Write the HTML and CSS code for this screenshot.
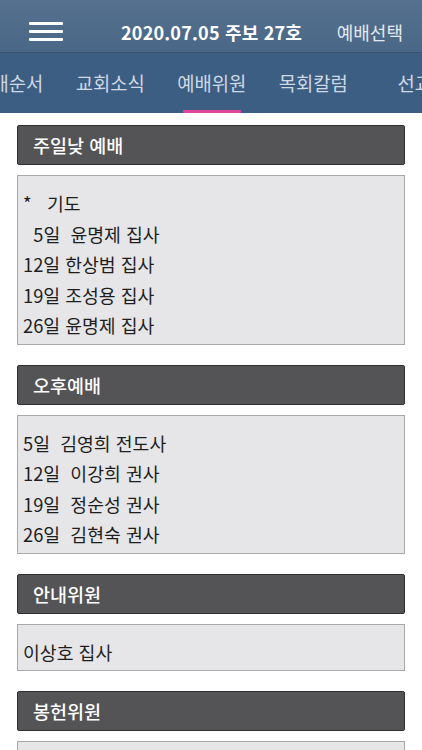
FILE: index.html
```html
<!DOCTYPE html>
<html lang="ko">
<head>
<meta charset="utf-8">
<link rel="stylesheet" href="styles.css">
</head>
<body>
<header class="topbar">
  <button class="menu" aria-label="menu">
    <svg width="34" height="20" viewBox="0 0 34 20"><g fill="#fff"><rect x="0" y="0" width="34" height="3" rx="1"/><rect x="0" y="8" width="34" height="3" rx="1"/><rect x="0" y="16" width="34" height="3" rx="1"/></g></svg>
  </button>
  <div class="title">2020.07.05 주보 27호</div>
  <div class="select">예배선택</div>
</header>
<nav class="tabs">
  <div class="tabs-inner">
    <div class="tab">예배순서</div>
    <div class="tab">교회소식</div>
    <div class="tab active">예배위원</div>
    <div class="tab">목회칼럼</div>
    <div class="tab">선교</div>
  </div>
</nav>
<main class="content">
  <section class="sec">
    <h2 class="sec-head">주일낮 예배</h2>
    <div class="sec-body">
      <div class="line">*   기도</div>
      <div class="line">  5일  윤명제 집사</div>
      <div class="line">12일 한상범 집사</div>
      <div class="line">19일 조성용 집사</div>
      <div class="line">26일 윤명제 집사</div>
    </div>
  </section>
  <section class="sec">
    <h2 class="sec-head">오후예배</h2>
    <div class="sec-body">
      <div class="line">5일  김영희 전도사</div>
      <div class="line">12일  이강희 권사</div>
      <div class="line">19일  정순성 권사</div>
      <div class="line">26일  김현숙 권사</div>
    </div>
  </section>
  <section class="sec">
    <h2 class="sec-head">안내위원</h2>
    <div class="sec-body">
      <div class="line">이상호 집사</div>
    </div>
  </section>
  <section class="sec">
    <h2 class="sec-head">봉헌위원</h2>
    <div class="sec-body">
      <div class="line">이상호 집사</div>
    </div>
  </section>
</main>
</body>
</html>
```

FILE: styles.css
```css
* { box-sizing: border-box; }
html, body { margin: 0; padding: 0; background: #fff; }
body {
  font-family: "Noto Sans CJK KR", "Noto Sans", "Liberation Sans", sans-serif;
  color: #222;
  overflow: hidden;
}
.topbar {
  height: 53px;
  padding-top: 11px;
  background: linear-gradient(#56718f, #4a6787);
  border-bottom: 1px solid #3b5675;
  display: flex;
  align-items: center;
  color: #fff;
}
.menu {
  background: none;
  border: 0;
  padding: 0;
  margin-left: 29px;
  width: 34px;
  height: 20px;
  display: flex;
}
.title {
  margin-left: 58px;
  font-size: 18px;
  font-weight: 700;
  letter-spacing: 0.2px;
}
.select {
  margin-left: auto;
  margin-right: 19px;
  font-size: 18px;
  color: #e4e9f0;
}
.tabs {
  height: 60px;
  background: #3d5e83;
  overflow: hidden;
}
.tabs-inner {
  display: flex;
  margin-left: -42px;
  height: 100%;
}
.tab {
  flex: 0 0 101.5px;
  text-align: center;
  font-size: 18.8px;
  color: #cfd9e4;
  line-height: 60px;
  position: relative;
}
.tab.active::after {
  content: "";
  position: absolute;
  left: 22px;
  right: 22px;
  bottom: 0;
  height: 3px;
  background: #e0449b;
  border-radius: 1px;
}
.content {
  padding: 12px 17px 0;
}
.sec { margin-bottom: 20px; }
.sec-head {
  margin: 0 0 10px;
  height: 40px;
  background: #545456;
  border: 1px solid #2f2f31;
  border-radius: 2px;
  color: #fff;
  font-size: 18.5px;
  font-weight: 500;
  line-height: 38px;
  padding-left: 15px;
}
.sec-body {
  background: #e6e6e8;
  border: 1.5px solid #a9a9ab;
  padding: 12px 5px 3px;
}
.line {
  white-space: pre;
  font-size: 18.3px;
  line-height: 30.5px;
  color: #1e1e1e;
}
```
